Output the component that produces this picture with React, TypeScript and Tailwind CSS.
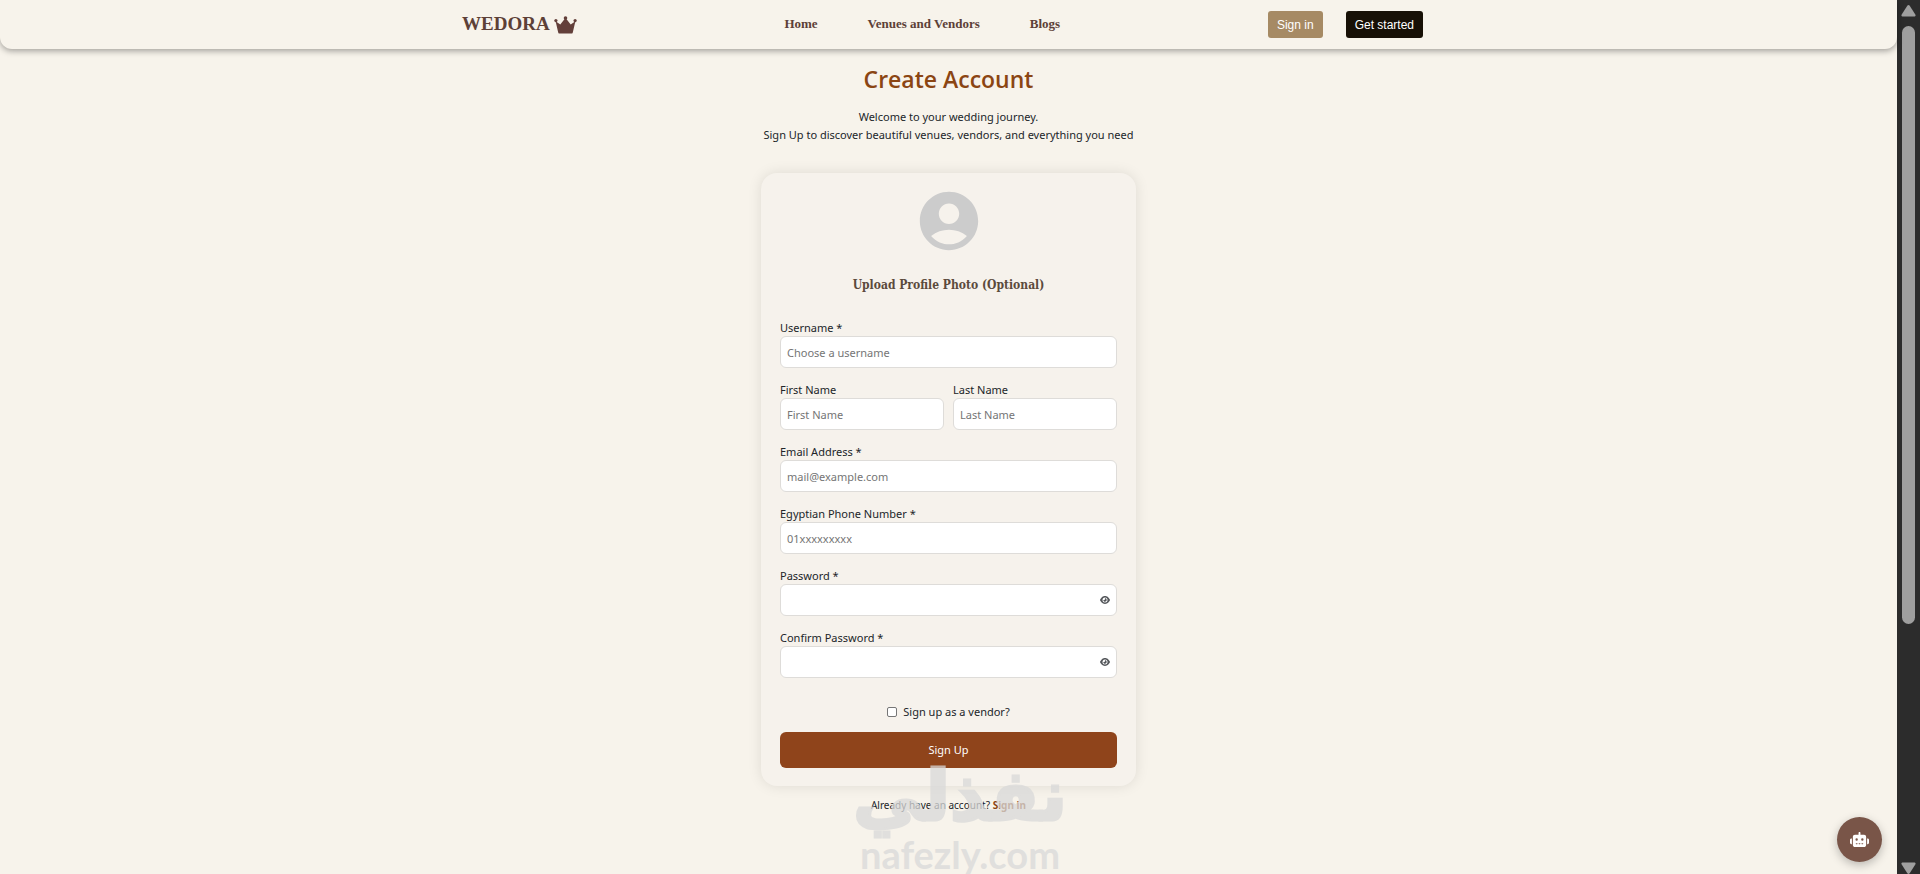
import { useState } from "react";
import { FaEye, FaRobot } from "react-icons/fa6";
import { MdAccountCircle } from "react-icons/md";

const inputStyle =
  "w-full h-8 rounded-md border border-[#dedcd9] bg-white px-1.5 text-[11px] text-[#212529] placeholder:text-[#757575] outline-none";

type FieldProps = {
  id: string;
  label: string;
  placeholder?: string;
  type?: string;
};

const Field = ({ id, label, placeholder, type = "text" }: FieldProps) => {
  return (
    <div className="flex-1 min-w-0">
      <label htmlFor={id} className="block leading-[17px]">
        {label}
      </label>
      <input id={id} type={type} placeholder={placeholder} className={inputStyle} />
    </div>
  );
};

const PasswordField = ({ id, label }: FieldProps) => {
  const [visible, setVisible] = useState(false);

  return (
    <div>
      <label htmlFor={id} className="block leading-[17px]">
        {label}
      </label>
      <div className="relative">
        <input id={id} type={visible ? "text" : "password"} className={inputStyle} />
        <button
          type="button"
          aria-label="Toggle password visibility"
          onClick={() => setVisible(!visible)}
          className="absolute right-[7px] top-1/2 -translate-y-1/2 text-[#55585c]"
        >
          <FaEye size={10} />
        </button>
      </div>
    </div>
  );
};

const Crown = () => {
  return (
    <svg width="23" height="18" viewBox="0 0 23 18" fill="#633f3a">
      <circle cx="1.9" cy="4.6" r="1.6" />
      <circle cx="11.5" cy="2" r="1.8" />
      <circle cx="21.1" cy="4.6" r="1.6" />
      <path d="M1.6 5.2 6.3 8.6 10.6 3h1.8l4.3 5.600 4.700-3.400-2.600 11.200a1.600 1.600 0 0 1-1.600 1.200H5.800a1.600 1.600 0 0 1-1.600-1.200z" />
    </svg>
  );
};

const Navbar = () => {
  return (
    <nav className="h-[49px] rounded-b-xl bg-[#f7f3eb] pr-3 shadow-[0_2px_6px_rgba(0,0,0,0.35)]">
      <div className="mx-auto h-full max-w-[961px] flex items-center justify-between text-[#5d4037] font-['Liberation_Serif',serif] font-bold">

        <a href="#" className="flex items-center gap-1 text-[19px]">
          WEDORA
          <Crown />
        </a>

        <div className="flex gap-[50px] pb-0.5 text-[13px] leading-5">
          <a href="#">Home</a>
          <a href="#">Venues and Vendors</a>
          <a href="#">Blogs</a>
        </div>

        <div className="flex gap-[23px] font-['Liberation_Sans',sans-serif] text-[12px] font-normal text-white">
          <button className="h-[27px] rounded-[3px] bg-[#a68a64] px-[9px]">Sign in</button>
          <button className="h-[27px] rounded-[3px] bg-[#171006] px-[9px]">Get started</button>
        </div>

      </div>
    </nav>
  );
};

const SignUpForm = () => {
  return (
    <form className="mt-[29px] w-[375px] rounded-2xl bg-[#f6f2ec] px-[19px] pt-[13px] pb-[18px] shadow-[0_0_14px_rgba(0,0,0,0.1)]">

      <div className="flex flex-col items-center">
        <MdAccountCircle size={70} className="text-[#cccccc]" />
        <button
          type="button"
          className="mt-[19px] h-5 font-['DejaVu_Serif_Condensed','DejaVu_Serif',serif] text-[12px] font-bold text-[#5b4a3c]"
        >
          Upload Profile Photo (Optional)
        </button>
      </div>

      <div className="mt-6 flex flex-col gap-[13px]">
        <Field id="username" label="Username *" placeholder="Choose a username" />
        <div className="flex gap-[9px]">
          <Field id="firstName" label="First Name" placeholder="First Name" />
          <Field id="lastName" label="Last Name" placeholder="Last Name" />
        </div>
        <Field id="email" label="Email Address *" placeholder="mail@example.com" type="email" />
        <Field id="phone" label="Egyptian Phone Number *" placeholder="01xxxxxxxxx" type="tel" />
        <PasswordField id="password" label="Password *" />
        <PasswordField id="confirmPassword" label="Confirm Password *" />
      </div>

      <label className="mt-[25px] flex items-center justify-center gap-1.5 leading-[18px]">
        <input
          type="checkbox"
          className="size-[10px] appearance-none rounded-[2px] border border-[#767676] bg-white checked:bg-[#8f441b]"
        />
        Sign up as a vendor?
      </label>

      <button type="submit" className="mt-[11px] h-9 w-full rounded-md bg-[#8f441b] text-white">
        Sign Up
      </button>
    </form>
  );
};

const Scrollbar = () => {
  return (
    <div className="w-[23px] shrink-0 bg-[#2c2c2c] flex flex-col items-center pt-[5px] text-[#9f9f9f]">
      <svg width="15" height="12" viewBox="0 0 15 12" fill="currentColor">
        <path d="M6.3.8a1.5 1.5 0 0 1 2.4 0l5.6 8.6c.7 1.2.1 2.2-1.2 2.2H1.9C.6 11.6 0 10.6.7 9.4z" />
      </svg>
      <div className="mt-[9px] h-[598px] w-[13px] rounded-full bg-[#9f9f9f]" />
      <svg className="mt-auto" width="15" height="12" viewBox="0 0 15 12" fill="currentColor">
        <path d="M6.3 11.2a1.5 1.5 0 0 0 2.4 0l5.6-8.6C15 1.4 14.4.4 13.1.4H1.9C.6.4 0 1.4.7 2.6z" />
      </svg>
    </div>
  );
};

const Watermark = () => {
  return (
    <div className="pointer-events-none absolute inset-x-0 bottom-0 flex flex-col items-center font-bold text-[#d9d9d9] opacity-75">
      <span
        dir="rtl"
        lang="ar"
        className="font-['DejaVu_Sans',sans-serif] text-[70px] leading-[76px] [-webkit-text-stroke:3px_#d9d9d9]"
      >
        نفذلي
      </span>
      <span className="font-['Lato',sans-serif] text-[38px] leading-[40px]">nafezly.com</span>
    </div>
  );
};

const App = () => {
  return (
    <div className="relative flex min-h-screen bg-[#f7f3eb] font-['Noto_Sans',sans-serif] text-[11px] text-[#212529]">

      <div className="relative flex-1">
        <Navbar />

        <main className="flex flex-col items-center pt-3">
          <h1 className="font-['Open_Sans',sans-serif] text-[23px] leading-9 font-semibold text-[#8b4513]">
            Create Account
          </h1>
          <p className="mt-[11px] text-center leading-[18px]">
            Welcome to your wedding journey.
            <br />
            Sign Up to discover beautiful venues, vendors, and everything you need
          </p>

          <SignUpForm />

          <p className="mt-2.5 text-[10px] leading-[18px]">
            Already have an account?{" "}
            <a href="#" className="font-bold text-[#8b4513]">
              Sign in
            </a>
          </p>
        </main>

        <button
          aria-label="Open chat"
          className="absolute right-[15px] bottom-3 size-[45px] flex items-center justify-center rounded-full bg-[#795548] text-white shadow-[0_3px_10px_rgba(0,0,0,0.25)]"
        >
          <FaRobot size={19} />
        </button>
      </div>

      <Scrollbar />
      <Watermark />
    </div>
  );
};

export default App;
